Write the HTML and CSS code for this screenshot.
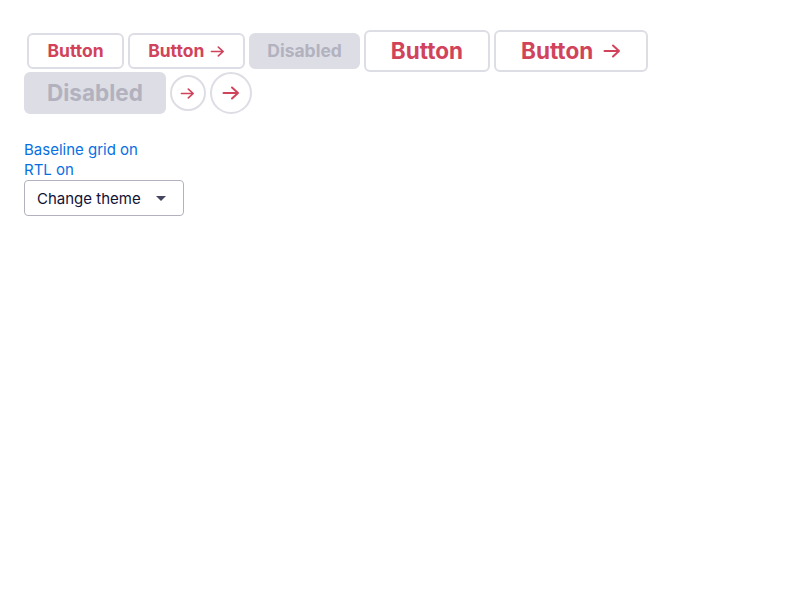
FILE: index.html
```html
<!DOCTYPE html>
<html lang="en">
<head>
<meta charset="utf-8">
<title>Buttons</title>
<link rel="stylesheet" href="styles.css">
</head>
<body>
<div class="page">
  <div class="buttons">
    <button class="btn btn-first">Button</button>
    <button class="btn">Button<svg class="arrow" viewBox="0 0 18 16"><path d="M1.5 8h14.5M10 2.5l6 5.5-6 5.5"/></svg></button>
    <button class="btn btn-disabled" disabled>Disabled</button>
    <button class="btn btn-large">Button</button>
    <button class="btn btn-large">Button<svg class="arrow arrow-large" viewBox="0 0 18 16"><path d="M1.5 8h14.5M10 2.5l6 5.5-6 5.5"/></svg></button>
    <button class="btn btn-large btn-disabled" disabled>Disabled</button>
    <button class="btn btn-icon" aria-label="Next"><svg class="arrow" viewBox="0 0 18 16"><path d="M1.5 8h14.5M10 2.5l6 5.5-6 5.5"/></svg></button>
    <button class="btn btn-icon btn-icon-large" aria-label="Next"><svg class="arrow arrow-large" viewBox="0 0 18 16"><path d="M1.5 8h14.5M10 2.5l6 5.5-6 5.5"/></svg></button>
  </div>
  <div class="toggles">
    <a class="toggle" href="#">Baseline grid on</a>
    <a class="toggle" href="#">RTL on</a>
  </div>
  <div class="select">
    <span class="select-label">Change theme</span>
    <span class="caret"></span>
  </div>
</div>
</body>
</html>
```

FILE: styles.css
```css
html, body {
  margin: 0;
  padding: 0;
  background: #ffffff;
}

body {
  font-family: Inter, "Liberation Sans", sans-serif;
  color: #111236;
}

.page {
  padding: 30px 24px;
}

.buttons {
  display: flex;
  flex-wrap: wrap;
  align-items: center;
  column-gap: 4px;
}

.btn {
  display: inline-flex;
  align-items: center;
  justify-content: center;
  box-sizing: border-box;
  height: 36px;
  padding: 0 18px;
  border: 2px solid #dddde5;
  border-radius: 6px;
  background: #ffffff;
  color: #d1435b;
  font-family: Inter, "Liberation Sans", sans-serif;
  font-size: 17.5px;
  font-weight: 700;
  line-height: 1;
  white-space: nowrap;
  cursor: pointer;
}

.btn-first {
  margin-left: 3px;
  padding: 0 18.5px;
}

.btn-large {
  height: 42px;
  padding: 0 25px;
  font-size: 22.5px;
}

.btn-disabled {
  padding: 0 16px;
  border-color: #dddde5;
  background: #dddde5;
  color: #b2b2bf;
  cursor: default;
}

.btn-large.btn-disabled {
  padding: 0 21px;
}

.btn-icon {
  width: 36px;
  padding: 0;
  border-radius: 50%;
}

.btn-icon-large {
  width: 42px;
  height: 42px;
}

.arrow {
  width: 15px;
  height: 13px;
  margin-left: 6px;
  fill: none;
  stroke: currentColor;
  stroke-width: 2;
  stroke-linecap: round;
  stroke-linejoin: round;
}

.arrow-large {
  width: 18px;
  height: 16px;
  margin-left: 10px;
}

.btn-icon .arrow {
  margin-left: 0;
}

.toggles {
  display: flex;
  flex-direction: column;
  align-items: flex-start;
  margin-top: 26px;
}

.toggle {
  color: #0770e3;
  font-size: 15px;
  line-height: 20px;
  text-decoration: none;
}

.select {
  display: flex;
  align-items: center;
  justify-content: space-between;
  box-sizing: border-box;
  width: 160px;
  height: 36px;
  padding: 0 17px 0 12px;
  border: 1px solid #b2b2bf;
  border-radius: 4px;
  background: #ffffff;
  font-size: 15px;
  color: #111236;
}

.caret {
  width: 0;
  height: 0;
  border-left: 5px solid transparent;
  border-right: 5px solid transparent;
  border-top: 5px solid #444560;
}
```
